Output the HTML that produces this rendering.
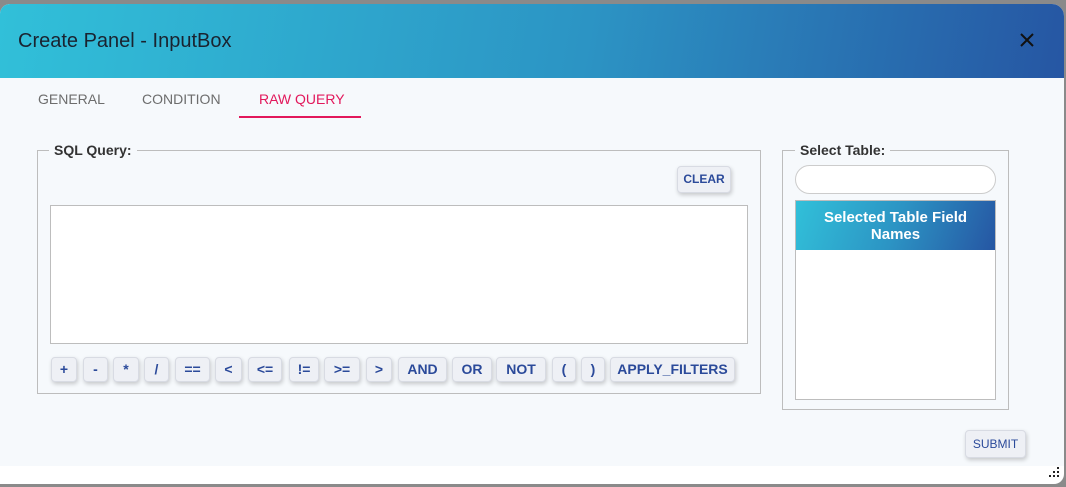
<!DOCTYPE html><html><head><style>
*{box-sizing:border-box;margin:0;padding:0}
body{width:1066px;height:487px;background:#8a8a8a;font-family:"Liberation Sans",Arial,sans-serif;position:relative;overflow:hidden}
.dlg{position:absolute;left:0;top:4px;width:1064px;height:480px;background:#fff;border-radius:10px 12px 10px 0;overflow:hidden}
.hdr{position:absolute;left:0;top:0;width:100%;height:74px;background:linear-gradient(100deg,#31c0d9 0%,#2c94c4 55%,#2656a3 100%)}
.title{position:absolute;left:18px;top:26px;font-size:20px;color:#1a2330}
.x{position:absolute;left:1018px;top:27px}
.body{position:absolute;left:0;top:74px;width:100%;height:388px;background:#f6f9fc}
.in{position:absolute;left:0;top:-4px;width:100%;height:100%}
.tab{position:absolute;top:17px;font-size:14px;color:#6d6d6d}
.ul{position:absolute;left:239px;top:42px;width:122px;height:2px;background:#e2185b}
.fs{position:absolute;border:1px solid #bdbdbd}
.lg{position:absolute;top:-9px;background:#f6f9fc;padding:0 5px;font-size:14px;font-weight:bold;color:#333}
.btn{position:absolute;height:25px;background:#eef0f5;border:1px solid #d8dbe3;border-radius:4px;box-shadow:1px 2px 4px rgba(0,0,0,.2);color:#2b4a9a;font-size:14px;font-weight:bold;text-align:center;line-height:23px}
.d{position:absolute;width:2px;height:2px;background:#222}
</style></head><body>
<div class="dlg">
<div class="hdr"><div class="title">Create Panel - InputBox</div>
<svg class="x" width="18" height="18" viewBox="0 0 18 18"><path d="M3 3L15 15M15 3L3 15" stroke="#111" stroke-width="2"/></svg></div>
<div class="body"><div class="in">
<div class="tab" style="left:38px">GENERAL</div>
<div class="tab" style="left:142px">CONDITION</div>
<div class="tab" style="left:259px;color:#e2185b">RAW QUERY</div>
<div class="ul"></div>
<div class="fs" style="left:37px;top:76px;width:724px;height:244px"><div class="lg" style="left:11px">SQL Query:</div></div>
<div class="btn" style="left:677px;top:92px;width:54px;height:27px;font-size:12px;line-height:25px">CLEAR</div>
<div style="position:absolute;left:50px;top:131px;width:698px;height:139px;background:#fff;border:1px solid #bdbdbd"></div>
<div class="btn" style="left:51px;top:283px;width:26px">+</div>
<div class="btn" style="left:83px;top:283px;width:25px">-</div>
<div class="btn" style="left:113px;top:283px;width:26px">*</div>
<div class="btn" style="left:144px;top:283px;width:25px">/</div>
<div class="btn" style="left:175px;top:283px;width:35px">==</div>
<div class="btn" style="left:215px;top:283px;width:27px">&lt;</div>
<div class="btn" style="left:248px;top:283px;width:34px">&lt;=</div>
<div class="btn" style="left:289px;top:283px;width:30px">!=</div>
<div class="btn" style="left:324px;top:283px;width:36px">&gt;=</div>
<div class="btn" style="left:366px;top:283px;width:26px">&gt;</div>
<div class="btn" style="left:398px;top:283px;width:49px">AND</div>
<div class="btn" style="left:452px;top:283px;width:40px">OR</div>
<div class="btn" style="left:496px;top:283px;width:50px">NOT</div>
<div class="btn" style="left:552px;top:283px;width:24px">(</div>
<div class="btn" style="left:581px;top:283px;width:24px">)</div>
<div class="btn" style="left:610px;top:283px;width:125px">APPLY_FILTERS</div>
<div class="fs" style="left:782px;top:76px;width:227px;height:260px"><div class="lg" style="left:12px">Select Table:</div></div>
<div style="position:absolute;left:795px;top:91px;width:201px;height:29px;background:#fff;border:1px solid #ccc;border-radius:15px"></div>
<div style="position:absolute;left:795px;top:126px;width:201px;height:200px;background:#fff;border:1px solid #bdbdbd"></div>
<div style="position:absolute;left:796px;top:127px;width:199px;height:49px;background:linear-gradient(110deg,#31c0d9,#2c94c4 50%,#2656a3);color:#fff;font-weight:bold;font-size:15px;text-align:center;line-height:17px;padding-top:8px">Selected Table Field<br>Names</div>
<div class="btn" style="left:965px;top:356px;width:61px;height:28px;font-size:12px;font-weight:normal;line-height:26px">SUBMIT</div>
</div></div>
<div class="d" style="left:1057px;top:463px"></div>
<div class="d" style="left:1053px;top:467px"></div><div class="d" style="left:1057px;top:467px"></div>
<div class="d" style="left:1049px;top:471px"></div><div class="d" style="left:1053px;top:471px"></div><div class="d" style="left:1057px;top:471px"></div>
</div>
</body></html>
